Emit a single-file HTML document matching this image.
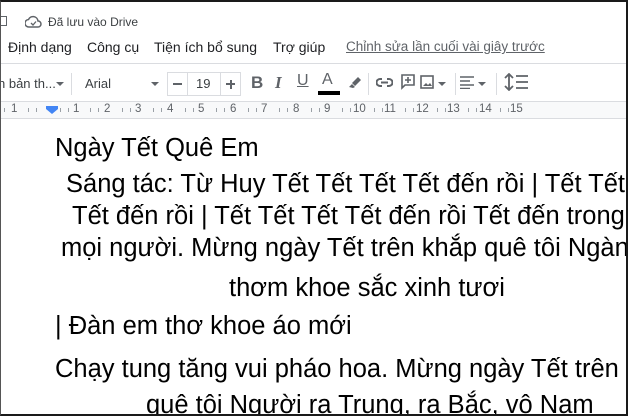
<!DOCTYPE html>
<html><head><meta charset="utf-8"><style>
*{margin:0;padding:0;box-sizing:border-box}
body{width:628px;height:416px;overflow:hidden;background:#fff;font-family:"Liberation Sans",Arial,sans-serif;position:relative;color:#202124}
.a{position:absolute;white-space:nowrap}
.frame{position:absolute;left:0;top:0;width:628px;height:416px;border-top:2px solid #1a1a1a;border-left:1px solid #555;border-right:2px solid #1a1a1a;border-bottom:2px solid #1a1a1a;pointer-events:none;z-index:10}
.menu{font-size:14px;top:39px;color:#202124}
.sep{position:absolute;width:1px;height:22px;top:73px;background:#dadce0}
.doc{font-size:25.5px;color:#000;line-height:1}
.rn{position:absolute;top:103px;font-size:11.5px;color:#5f6368}
.tk{position:absolute;top:108px;width:1px;height:4px;background:#9aa0a6}
.clip{position:absolute;left:0;top:119px;width:628px;height:297px;overflow:hidden}
</style></head><body>
<div class="frame"></div>
<div class="a" style="left:-3px;top:16px;width:10px;height:10px;border:1.5px solid #5f6368;border-left:none"></div>
<svg class="a" style="left:25px;top:15px" width="17" height="13" viewBox="0 0 17 13"><path d="M4 12h9a3 3 0 0 0 0-6 5 5 0 0 0-9.5-1.5A3.5 3.5 0 0 0 4 12z" fill="none" stroke="#5f6368" stroke-width="1.5"/><path d="M6 8l2 2 3-3.5" fill="none" stroke="#5f6368" stroke-width="1.3"/></svg>
<div class="a" style="left:48px;top:15px;font-size:12px;color:#3c4043">Đã lưu vào Drive</div>
<div class="a menu" style="left:8px">Định dạng</div>
<div class="a menu" style="left:87px">Công cụ</div>
<div class="a menu" style="left:154px">Tiện ích bổ sung</div>
<div class="a menu" style="left:273px">Trợ giúp</div>
<div class="a menu" style="left:346px;color:#5f6368;text-decoration:underline;font-size:13.5px">Chỉnh sửa lần cuối vài giây trước</div>
<div class="a" style="left:0;top:63px;width:628px;height:1px;background:#dadce0"></div>
<div class="a" style="left:-2px;top:76px;font-size:13px;color:#3c4043">n bản th...</div>
<div class="a" style="left:56px;top:82px;border:4px solid transparent;border-top:4px solid #5f6368"></div>
<div class="sep" style="left:71px"></div>
<div class="a" style="left:85px;top:76px;font-size:13px;color:#3c4043">Arial</div>
<div class="a" style="left:151px;top:82px;border:4px solid transparent;border-top:4px solid #5f6368"></div>
<div class="a" style="left:167px;top:72px;width:74px;height:24px;border:1px solid #dadce0"></div>
<div class="a" style="left:187px;top:72px;width:1px;height:24px;background:#dadce0"></div>
<div class="a" style="left:220px;top:72px;width:1px;height:24px;background:#dadce0"></div>
<div class="a" style="left:173px;top:83px;width:9px;height:2px;background:#5f6368"></div>
<div class="a" style="left:196px;top:76px;font-size:13px;color:#3c4043">19</div>
<div class="a" style="left:226px;top:83px;width:9px;height:2px;background:#5f6368"></div>
<div class="a" style="left:229.5px;top:79.5px;width:2px;height:9px;background:#5f6368"></div>
<div class="a" style="left:251px;top:73px;font-size:17px;font-weight:bold;color:#5f6368">B</div>
<div class="a" style="left:275px;top:73px;font-size:17px;font-style:italic;font-weight:bold;color:#5f6368;font-family:'Liberation Serif',serif">I</div>
<div class="a" style="left:297px;top:72px;font-size:16px;color:#5f6368;text-decoration:underline">U</div>
<div class="a" style="left:322px;top:71px;font-size:16px;color:#5f6368">A</div>
<div class="a" style="left:318px;top:91px;width:22px;height:4px;background:#000"></div>
<svg class="a" style="left:347px;top:75px" width="16" height="14" viewBox="0 0 16 14"><path d="M2 12l3-3 3 3-2 1zM5 8l6-6 3 3-6 6z" fill="#5f6368"/></svg>
<div class="sep" style="left:368px"></div>
<svg class="a" style="left:376px;top:77px" width="17" height="11" viewBox="0 0 17 11"><path d="M6 2H4a3.5 3.5 0 0 0 0 7h2M11 2h2a3.5 3.5 0 0 1 0 7h-2M5 5.5h7" fill="none" stroke="#5f6368" stroke-width="2"/></svg>
<svg class="a" style="left:400px;top:73px" width="16" height="17" viewBox="0 0 16 17"><path d="M2 2h12v10H5l-3 3z" fill="none" stroke="#5f6368" stroke-width="1.6"/><path d="M8 4v6M5 7h6" stroke="#5f6368" stroke-width="1.6"/></svg>
<svg class="a" style="left:420px;top:75px" width="14" height="14" viewBox="0 0 14 14"><rect x="1" y="1" width="12" height="12" fill="none" stroke="#5f6368" stroke-width="1.6"/><path d="M3 11l3-3 2 2 2-2 2 3z" fill="#5f6368"/></svg>
<div class="a" style="left:438px;top:82px;border:4px solid transparent;border-top:4px solid #5f6368"></div>
<div class="sep" style="left:455px"></div>
<svg class="a" style="left:460px;top:76px" width="14" height="13" viewBox="0 0 14 13"><path d="M0 1h14M0 5h10M0 9h14M0 12.5h10" stroke="#5f6368" stroke-width="1.6"/></svg>
<div class="a" style="left:478px;top:82px;border:4px solid transparent;border-top:4px solid #5f6368"></div>
<div class="sep" style="left:496px"></div>
<svg class="a" style="left:504px;top:73px" width="24" height="18" viewBox="0 0 24 18"><path d="M5 1v16M1 5l4-4 4 4M1 13l4 4 4-4M12 3h12M12 9h12M12 15h12" fill="none" stroke="#5f6368" stroke-width="1.8"/></svg>
<div class="a" style="left:0;top:101px;width:628px;height:1px;background:#dadce0"></div>
<div class="a" style="left:0;top:102px;width:628px;height:16px;background:#f8f9fa"></div>
<div class="a" style="left:0;top:118px;width:628px;height:1px;background:#dadce0"></div>
<div class="rn" style="left:11px">1</div>
<div class="rn" style="left:73px">1</div><div class="rn" style="left:104px">2</div><div class="rn" style="left:135px">3</div><div class="rn" style="left:167px">4</div><div class="rn" style="left:198px">5</div><div class="rn" style="left:230px">6</div><div class="rn" style="left:261px">7</div><div class="rn" style="left:293px">8</div><div class="rn" style="left:324px">9</div><div class="rn" style="left:353px">10</div><div class="rn" style="left:384px">11</div><div class="rn" style="left:416px">12</div><div class="rn" style="left:447px">13</div><div class="rn" style="left:479px">14</div><div class="rn" style="left:510px">15</div>
<div class="tk" style="left:4px"></div><div class="tk" style="left:28px"></div><div class="tk" style="left:36px"></div><div class="tk" style="left:60px"></div><div class="tk" style="left:68px"></div><div class="tk" style="left:90px"></div><div class="tk" style="left:98px"></div><div class="tk" style="left:122px"></div><div class="tk" style="left:130px"></div><div class="tk" style="left:153px"></div><div class="tk" style="left:161px"></div><div class="tk" style="left:185px"></div><div class="tk" style="left:193px"></div><div class="tk" style="left:216px"></div><div class="tk" style="left:224px"></div><div class="tk" style="left:248px"></div><div class="tk" style="left:256px"></div><div class="tk" style="left:279px"></div><div class="tk" style="left:287px"></div><div class="tk" style="left:311px"></div><div class="tk" style="left:319px"></div><div class="tk" style="left:342px"></div><div class="tk" style="left:350px"></div><div class="tk" style="left:374px"></div><div class="tk" style="left:382px"></div><div class="tk" style="left:405px"></div><div class="tk" style="left:413px"></div><div class="tk" style="left:437px"></div><div class="tk" style="left:445px"></div><div class="tk" style="left:468px"></div><div class="tk" style="left:476px"></div><div class="tk" style="left:500px"></div><div class="tk" style="left:508px"></div>
<div class="a" style="left:46px;top:106px;width:12px;height:3px;background:#4285f4"></div>
<div class="a" style="left:46px;top:109px;border:6px solid transparent;border-top:5px solid #4285f4;border-bottom:none"></div>
<div class="clip">
<div class="a doc" style="left:55px;top:17px">Ngày Tết Quê Em</div>
<div class="a doc" style="left:66px;top:53px">Sáng tác: Từ Huy Tết Tết Tết Tết đến rồi | Tết Tết Tết</div>
<div class="a doc" style="left:72px;top:85px">Tết đến rồi | Tết Tết Tết Tết đến rồi Tết đến trong</div>
<div class="a doc" style="left:61px;top:117px">mọi người. Mừng ngày Tết trên khắp quê tôi Ngàn hoa</div>
<div class="a doc" style="left:229px;top:157px">thơm khoe sắc xinh tươi</div>
<div class="a doc" style="left:55px;top:195px">| Đàn em thơ khoe áo mới</div>
<div class="a doc" style="left:55px;top:238px">Chạy tung tăng vui pháo hoa. Mừng ngày Tết trên khắp</div>
<div class="a doc" style="left:146px;top:274px">quê tôi Người ra Trung, ra Bắc, vô Nam</div>
</div>
</body></html>
